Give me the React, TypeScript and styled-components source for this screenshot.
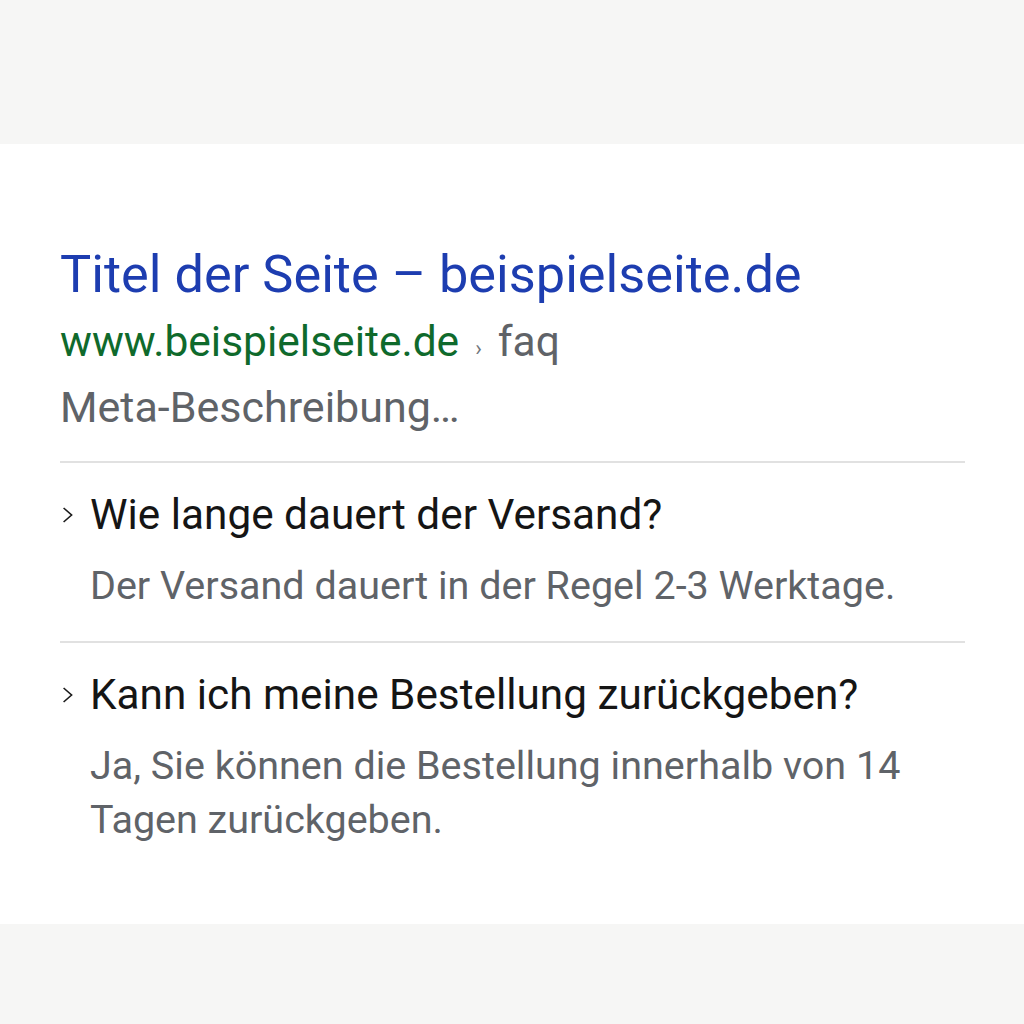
import React from "react";
import styled, { createGlobalStyle } from "styled-components";

const Global = createGlobalStyle`
  html, body { margin: 0; padding: 0; background: #f6f6f5; }
  body { font-family: Roboto, "Open Sans", Arial, sans-serif; }
`;

const Page = styled.div`
  min-height: 1024px;
  padding-top: 144px;
  box-sizing: border-box;
`;

const Card = styled.main`
  background: #ffffff;
  height: 780px;
  box-sizing: border-box;
  padding: 98px 59px 0 60px;
`;

const Title = styled.h1`
  margin: 0;
  font-size: 52.3px;
  font-weight: 400;
  line-height: 64px;
  color: #1d3db0;
  white-space: nowrap;
`;

const UrlRow = styled.div`
  margin-top: 4px;
  font-size: 42.5px;
  line-height: 64px;
  white-space: nowrap;
`;

const Domain = styled.span`
  color: #0f6a2c;
`;

const Sep = styled.span`
  display: inline-block;
  color: #70757a;
  font-size: 22px;
  line-height: 1;
  margin: 0 16px 0 16px;
`;

const Path = styled.span`
  color: #5f6368;
`;

const Meta = styled.p`
  margin: 1px 0 0 0;
  font-size: 43px;
  line-height: 64px;
  color: #5f6368;
`;

const Divider = styled.hr<{ $top: number }>`
  border: 0;
  border-top: 2px solid #e1e1e1;
  margin: ${(p) => p.$top}px 0 0 0;
`;

const Item = styled.section`
  padding-top: 20px;
`;

const Question = styled.div`
  display: flex;
  align-items: center;
  gap: 16px;
  padding-left: 2px;
  font-size: 42.3px;
  line-height: 64px;
  color: #151515;
  white-space: nowrap;
`;

const Chevron = styled.svg`
  width: 12px;
  height: 16px;
  flex: none;
`;

const Answer = styled.p`
  margin: 12px 0 0 0;
  padding-left: 30px;
  font-size: 39.5px;
  line-height: 54px;
  color: #5f6368;
`;

const Arrow = () => (
  <Chevron viewBox="0 0 12 16">
    <path d="M1.6 1 L9.6 8 L1.6 15" fill="none" stroke="#1a1a1a" strokeWidth="1.6" />
  </Chevron>
);

export default function App() {
  return (
    <>
      <Global />
      <Page>
        <Card>
          <Title>Titel der Seite – beispielseite.de</Title>
          <UrlRow>
            <Domain>www.beispielseite.de</Domain>
            <Sep>›</Sep>
            <Path>faq</Path>
          </UrlRow>
          <Meta>Meta-Beschreibung…</Meta>
          <Divider $top={22} />
          <Item>
            <Question>
              <Arrow />
              Wie lange dauert der Versand?
            </Question>
            <Answer>Der Versand dauert in der Regel 2-3 Werktage.</Answer>
          </Item>
          <Divider $top={28} />
          <Item>
            <Question>
              <Arrow />
              Kann ich meine Bestellung zurückgeben?
            </Question>
            <Answer>
              Ja, Sie können die Bestellung innerhalb von 14
              <br />
              Tagen zurückgeben.
            </Answer>
          </Item>
        </Card>
      </Page>
    </>
  );
}
